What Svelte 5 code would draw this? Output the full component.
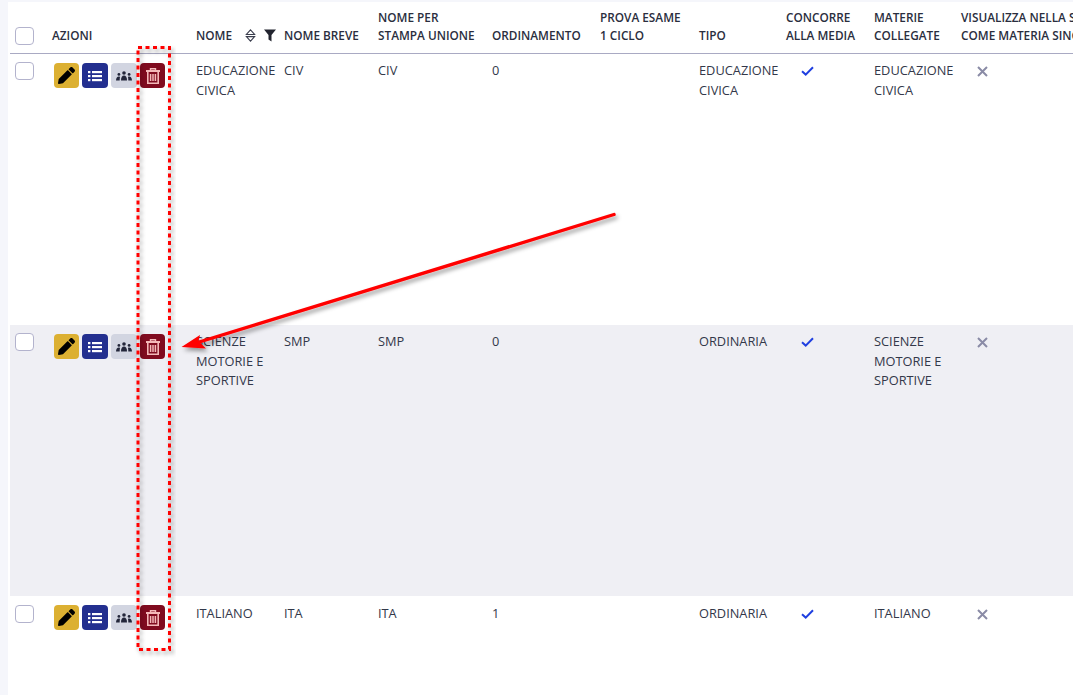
<script>
  const columns = ['check', 'actions', 'name', 'short', 'merge', 'order', 'exam', 'type', 'avg', 'linked', 'show'];

  const rows = [
    { name: 'EDUCAZIONE CIVICA', short: 'CIV', order: 0, type: 'EDUCAZIONE CIVICA', linked: 'EDUCAZIONE CIVICA' },
    { name: 'SCIENZE MOTORIE E SPORTIVE', short: 'SMP', order: 0, type: 'ORDINARIA', linked: 'SCIENZE MOTORIE E SPORTIVE', shaded: true },
    { name: 'ITALIANO', short: 'ITA', order: 1, type: 'ORDINARIA', linked: 'ITALIANO', last: true }
  ];
</script>

<div class="page">
  <div class="sheet">
    <table>
      <colgroup>
        {#each columns as col}
          <col class="col-{col}" />
        {/each}
      </colgroup>
      <thead>
        <tr>
          <th><span class="check head-check"></span></th>
          <th>AZIONI</th>
          <th>
            <div class="name-head">
              <span>NOME</span>
              <svg class="sort" viewBox="0 0 10 12" width="11" height="13">
                <path d="M5 .8 L8.8 5 H1.2 Z M1.2 7 H8.8 L5 11.2 Z" fill="none" stroke="#3a3d4d" stroke-width="1" />
              </svg>
              <svg class="funnel" viewBox="0 0 12 13" width="12" height="13">
                <path d="M0 .5 H12 L7.5 6 V12.5 L4.5 10.5 V6 Z" fill="#22242f" />
              </svg>
            </div>
          </th>
          <th>NOME BREVE</th>
          <th>NOME PER<br />STAMPA UNIONE</th>
          <th>ORDINAMENTO</th>
          <th>PROVA ESAME<br />1 CICLO</th>
          <th>TIPO</th>
          <th>CONCORRE<br />ALLA MEDIA</th>
          <th>MATERIE<br />COLLEGATE</th>
          <th>VISUALIZZA NELLA SCHEDA<br />COME MATERIA SINGOLA</th>
        </tr>
      </thead>
      <tbody>
        {#each rows as row}
          <tr class:shaded={row.shaded} class:last={row.last}>
            <td><span class="check"></span></td>
            <td>
              <div class="actions">
                <button class="btn edit" aria-label="Modifica">
                  <svg viewBox="0 0 512 512" width="17" height="17">
                    <path fill="#000" d="M497.9 142.1l-46.1 46.1c-4.7 4.7-12.3 4.7-17 0l-111-111c-4.7-4.7-4.7-12.3 0-17l46.1-46.1c18.7-18.7 49.1-18.7 67.9 0l60.1 60.1c18.8 18.7 18.8 49.1 0 67.9zM284.2 99.8L21.6 362.4.4 483.9c-2.9 16.4 11.4 30.6 27.8 27.8l121.5-21.3 262.6-262.6c4.7-4.7 4.7-12.3 0-17l-111-111c-4.8-4.7-12.4-4.7-17.1 0z" />
                  </svg>
                </button>
                <button class="btn list" aria-label="Elenco">
                  <svg viewBox="0 0 14 12" width="14" height="12" fill="#fff">
                    <rect x="0" y="1" width="2.4" height="2.2" />
                    <rect x="0" y="5" width="2.4" height="2.2" />
                    <rect x="0" y="9" width="2.4" height="2.2" />
                    <rect x="4" y="1" width="10" height="2.2" />
                    <rect x="4" y="5" width="10" height="2.2" />
                    <rect x="4" y="9" width="10" height="2.2" />
                  </svg>
                </button>
                <button class="btn group" aria-label="Gruppi">
                  <svg viewBox="0 0 16 10" width="16" height="10" fill="#23263a">
                    <circle cx="8" cy="2" r="1.8" />
                    <path d="M5 9.5 C5 6 6.2 4.6 8 4.6 C9.8 4.6 11 6 11 9.5 Z" />
                    <circle cx="2.9" cy="3.4" r="1.4" />
                    <path d="M0 9.5 C.1 7 1.2 5.6 2.9 5.6 C3.3 5.6 3.7 5.7 4 5.9 C3.7 7 3.7 8.2 3.7 9.5 Z" />
                    <circle cx="13.1" cy="3.4" r="1.4" />
                    <path d="M16 9.5 C15.9 7 14.8 5.6 13.1 5.6 C12.7 5.6 12.3 5.7 12 5.9 C12.3 7 12.3 8.2 12.3 9.5 Z" />
                  </svg>
                </button>
                <button class="btn remove" aria-label="Elimina">
                  <svg viewBox="0 0 14 16" width="14" height="16" fill="none" stroke="#f4b9b9">
                    <path d="M0 3 H14" stroke-width="2" />
                    <path d="M4.5 2.5 V.8 H9.5 V2.5" stroke-width="1.4" />
                    <path d="M1.8 3.5 V15.2 H12.2 V3.5" stroke-width="1.6" />
                    <path d="M4.6 6 V13 M7 6 V13 M9.4 6 V13" stroke-width="1.5" />
                  </svg>
                </button>
              </div>
            </td>
            <td>{row.name}</td>
            <td>{row.short}</td>
            <td>{row.short}</td>
            <td>{row.order}</td>
            <td></td>
            <td>{row.type}</td>
            <td>
              <svg class="flag yes" viewBox="0 0 13 10" width="13" height="10">
                <path d="M1 5.2 L4.7 8.6 L12 1.2" fill="none" stroke="#1f3fe0" stroke-width="2" />
              </svg>
            </td>
            <td>{row.linked}</td>
            <td>
              <svg class="flag no" viewBox="0 0 11 11" width="11" height="11">
                <path d="M1 1 L10 10 M10 1 L1 10" fill="none" stroke="#8a8ba6" stroke-width="2" />
              </svg>
            </td>
          </tr>
        {/each}
      </tbody>
    </table>
  </div>

  <!-- annotation drawn over the screenshot -->
  <svg class="markup" viewBox="0 0 1073 695" width="1073" height="695">
    <defs>
      <filter id="shade" x="-20%" y="-20%" width="140%" height="140%">
        <feDropShadow dx="2" dy="3" stdDeviation="2.2" flood-color="#000" flood-opacity="0.4" />
      </filter>
    </defs>
    <rect x="138" y="47.5" width="31.5" height="602" fill="none" stroke="#ff0000" stroke-width="3" stroke-dasharray="4 3.5" filter="url(#shade)" />
    <g filter="url(#shade)">
      <path d="M614 214.5 L196 343" stroke="#ff0000" stroke-width="3.4" stroke-linecap="round" fill="none" />
      <path d="M181.5 347 L200 335 L198.5 341 L206 348.5 Z" fill="#ff0000" />
    </g>
  </svg>
</div>

<style>
  :global(body) {
    margin: 0;
    background: #f5f6fb;
    overflow: hidden;
  }

  .page {
    position: relative;
    width: 1073px;
    height: 695px;
    overflow: hidden;
    font-family: "Open Sans", "Noto Sans", sans-serif;
    font-size: 12.8px;
    color: #33384a;
  }

  .sheet {
    margin: 2px 0 0 8px;
    height: 693px;
    padding-left: 2px;
    background: #fff;
    overflow: hidden;
  }

  table {
    width: 1300px;
    table-layout: fixed;
    border-collapse: separate;
    border-spacing: 0;
  }

  .col-check { width: 36px; }
  .col-actions { width: 144px; }
  .col-name { width: 88px; }
  .col-short { width: 94px; }
  .col-merge { width: 114px; }
  .col-order { width: 108px; }
  .col-exam { width: 99px; }
  .col-type { width: 87px; }
  .col-avg { width: 88px; }
  .col-linked { width: 87px; }
  .col-show { width: 355px; }

  th {
    height: 52px;
    padding: 0 0 9px 6px;
    box-sizing: border-box;
    vertical-align: bottom;
    text-align: left;
    font-size: 11.8px;
    font-weight: 600;
    line-height: 18px;
    color: #2a2e3e;
    white-space: nowrap;
    border-bottom: 1px solid #a9aac3;
  }

  td {
    height: 271px;
    padding: 7px 6px 0 6px;
    box-sizing: border-box;
    vertical-align: top;
    line-height: 19.6px;
  }

  tr.last td {
    height: 98px;
    padding-top: 8px;
  }

  tr.last .actions {
    margin-top: 1px;
  }

  tr.shaded td {
    background: #efeff4;
  }

  .check {
    display: block;
    width: 19px;
    height: 18px;
    margin-top: 1px;
    margin-left: -1px;
    box-sizing: border-box;
    background: #fff;
    border: 1px solid #b3b3cd;
    border-radius: 4px;
  }

  .head-check {
    margin-bottom: -1px;
  }

  .name-head {
    display: flex;
    align-items: center;
  }

  .sort {
    margin-left: 13px;
  }

  .funnel {
    margin-left: 8px;
  }

  .actions {
    display: flex;
    gap: 3px;
    margin: 2px 0 0 2px;
  }

  .btn {
    display: flex;
    align-items: center;
    justify-content: center;
    width: 26px;
    height: 25px;
    padding: 0;
    border: 0;
    border-radius: 4px;
  }

  .edit { width: 25px; background: #dcb032; }
  .list { background: #232f8f; }
  .group { background: #d2d5e1; }
  .remove { width: 25px; background: #800b1f; }

  .flag {
    display: block;
  }

  .yes {
    margin: 5px 0 0 15px;
  }

  .no {
    margin: 5px 0 0 16px;
  }

  .markup {
    position: absolute;
    left: 0;
    top: 0;
    pointer-events: none;
  }
</style>
